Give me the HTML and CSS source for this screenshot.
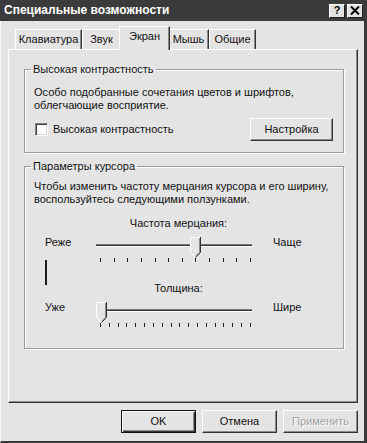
FILE: index.html
```html
<!DOCTYPE html>
<html lang="ru">
<head>
<meta charset="utf-8">
<title>Специальные возможности</title>
<link rel="stylesheet" href="styles.css">
</head>
<body>
<div class="window">
  <div class="titlebar">
    <span class="title">Специальные возможности</span>
    <div class="tbtns">
      <span class="tbtn">?</span>
      <span class="tbtn">
        <svg width="10" height="9" viewBox="0 0 10 9"><path d="M1 0.5 L9 8.5 M9 0.5 L1 8.5" stroke="#000" stroke-width="2"/></svg>
      </span>
    </div>
  </div>
  <div class="body">
    <div class="tabs">
      <div class="tab t1">Клавиатура</div>
      <div class="tab t2">Звук</div>
      <div class="tab t3 sel">Экран</div>
      <div class="tab t4">Мышь</div>
      <div class="tab t5">Общие</div>
    </div>
    <div class="panel">
      <fieldset class="group g1">
        <legend>Высокая контрастность</legend>
        <p class="desc">Особо подобранные сочетания цветов и шрифтов,<br>облегчающие восприятие.</p>
        <div class="crow">
          <label class="check"><span class="box"></span>Высокая контрастность</label>
          <button class="btn setup">Настройка</button>
        </div>
      </fieldset>
      <fieldset class="group g2">
        <legend>Параметры курсора</legend>
        <p class="desc">Чтобы изменить частоту мерцания курсора и его ширину,<br>воспользуйтесь следующими ползунками.</p>
        <div class="caption c1">Частота мерцания:</div>
        <div class="srow">
          <span class="slabel">Реже</span>
          <div class="slider">
            <div class="track"></div>
            <div class="ticks"><i></i><i></i><i></i><i></i><i></i><i></i><i></i><i></i><i></i><i></i><i></i><i></i></div>
            <svg class="thumb" style="left:94px" width="11" height="21" viewBox="0 0 11 21">
              <polygon points="0,0 11,0 11,15.5 5.5,21 0,15.5" fill="#e6e6e6"/>
              <path d="M0.5 15.5 V0.5 H10" stroke="#fff" fill="none"/>
              <path d="M0.5 15.5 L5.5 20.5" stroke="#fff" fill="none"/>
              <path d="M9.5 1 V15.2 L5.5 19.2" stroke="#8a8a8a" fill="none"/>
              <path d="M10.5 0 V15.5 L5.5 20.5" stroke="#333" fill="none"/>
            </svg>
          </div>
          <span class="rlabel">Чаще</span>
        </div>
        <div class="mid">
          <div class="cursor"></div>
          <div class="caption c2">Толщина:</div>
        </div>
        <div class="srow">
          <span class="slabel">Уже</span>
          <div class="slider">
            <div class="track"></div>
            <div class="ticks"><i></i><i></i><i></i><i></i><i></i><i></i><i></i><i></i><i></i><i></i><i></i><i></i><i></i><i></i><i></i><i></i><i></i><i></i></div>
            <svg class="thumb" style="left:0px" width="11" height="21" viewBox="0 0 11 21">
              <polygon points="0,0 11,0 11,15.5 5.5,21 0,15.5" fill="#e6e6e6"/>
              <path d="M0.5 15.5 V0.5 H10" stroke="#fff" fill="none"/>
              <path d="M0.5 15.5 L5.5 20.5" stroke="#fff" fill="none"/>
              <path d="M9.5 1 V15.2 L5.5 19.2" stroke="#8a8a8a" fill="none"/>
              <path d="M10.5 0 V15.5 L5.5 20.5" stroke="#333" fill="none"/>
            </svg>
          </div>
          <span class="rlabel">Шире</span>
        </div>
      </fieldset>
    </div>
    <div class="actions">
      <button class="btn dlg default">OK</button>
      <button class="btn dlg">Отмена</button>
      <button class="btn dlg disabled">Применить</button>
    </div>
  </div>
</div>
</body>
</html>
```

FILE: styles.css
```css
* { box-sizing: border-box; }
html, body { margin: 0; padding: 0; }
body {
  width: 367px;
  height: 443px;
  overflow: hidden;
  background: #e4e4e4;
  font-family: "Liberation Sans", Arial, sans-serif;
  font-size: 11px;
  line-height: 13px;
  color: #111;
}
.window {
  width: 367px;
  height: 443px;
  display: flex;
  flex-direction: column;
}
.titlebar {
  flex: none;
  height: 21px;
  background: #3b3b3b;
  display: flex;
  align-items: center;
  justify-content: space-between;
  padding: 0 4px 0 4px;
}
.title {
  color: #fff;
  font-weight: bold;
  font-size: 12px;
}
.tbtns { display: flex; gap: 2px; }
.tbtn {
  width: 16px;
  height: 14px;
  background: #e2e2e2;
  border: 1px solid;
  border-color: #fff #1e1e1e #1e1e1e #fff;
  display: flex;
  align-items: center;
  justify-content: center;
  font-weight: bold;
  font-size: 11px;
  color: #000;
}
.body {
  flex: 1;
  border-left: 1px solid #fafafa;
  border-right: 3px solid #3a3a3a;
  border-bottom: 2px solid #3a3a3a;
  padding: 5px 6px 0 7px;
}
.tabs {
  height: 23px;
  display: flex;
  align-items: flex-end;
  padding-left: 7px;
}
.tab {
  height: 20px;
  border-top: 1px solid #fff;
  border-left: 1px solid #fff;
  border-right: 1px solid #333;
  box-shadow: inset -1px 0 0 #8a8a8a;
  text-align: center;
  padding-top: 3px;
  white-space: nowrap;
}
.t1 { width: 67px; }
.t2 { width: 39px; }
.t3 { width: 47px; }
.t4 { width: 41px; }
.t5 { width: 47px; }
.tab.sel {
  position: relative;
  z-index: 1;
  height: 24px;
  width: 51px;
  margin: 0 -2px -1px -2px;
  background: #e4e4e4;
  padding-top: 3px;
}
.panel {
  height: 354px;
  border: 1px solid;
  border-color: #fff #333 #333 #fff;
  box-shadow: inset -1px -1px 0 #8a8a8a;
  padding-top: 13px;
}
.group {
  margin: 0 0 0 15px;
  width: 320px;
  padding: 10px 10px 0 9px;
  border: 1px solid #9a9a9a;
  box-shadow: inset 1px 1px 0 #fff, 1px 1px 0 #fff;
}
.group legend {
  padding: 0 2px;
  margin-left: -3px;
  line-height: 13px;
}
.g1 { padding-bottom: 11px; }
.g2 { margin-top: 7px; padding-top: 7px; padding-bottom: 20px; }
.desc { margin: 0; }
.crow {
  margin-top: 6px;
  display: flex;
  align-items: center;
  justify-content: space-between;
}
.check {
  display: flex;
  align-items: center;
  gap: 5px;
  padding-left: 1px;
}
.box {
  width: 13px;
  height: 13px;
  background: #fff;
  border: 1px solid;
  border-color: #808080 #fff #fff #808080;
  box-shadow: inset 1px 1px 0 #404040, inset -1px -1px 0 #d4d4d4;
}
.btn {
  font: inherit;
  color: #111;
  background: #e4e4e4;
  height: 23px;
  border: 1px solid;
  border-color: #fff #333 #333 #fff;
  box-shadow: inset -1px -1px 0 #8a8a8a;
  padding: 0;
  margin: 0;
}
.setup { width: 83px; }
.caption { line-height: 13px; }
.c1 { margin-top: 11px; margin-left: 62px; width: 158px; text-align: center; padding-left: 7px; }
.srow {
  margin-top: 6px;
  display: grid;
  grid-template-columns: 62px 158px auto;
  align-items: start;
}
.slabel { padding-left: 11px; }
.rlabel { padding-left: 19px; }
.slider {
  position: relative;
  margin-top: 1px;
  height: 26px;
}
.track {
  margin-top: 7px;
  width: 156px;
  height: 3px;
  border-top: 1px solid #777;
  border-bottom: 1px solid #fff;
  background: #3a3a3a;
}
.ticks {
  margin-top: 11px;
  width: 155px;
  padding-left: 4px;
  display: flex;
  justify-content: space-between;
}
.ticks i {
  display: block;
  width: 1px;
  height: 4px;
  background: #222;
}
.thumb {
  position: absolute;
  top: 0;
}
.mid {
  margin-top: -3px;
  height: 35px;
  display: grid;
  grid-template-columns: 62px 158px;
}
.cursor {
  margin-left: 11px;
  width: 2px;
  height: 25px;
  background: #1a1a1a;
}
.c2 { align-self: end; text-align: center; padding-left: 7px; }
.actions {
  margin-top: 7px;
  display: flex;
  justify-content: flex-end;
  gap: 6px;
}
.dlg { width: 75px; }
.default {
  border-color: #111;
  box-shadow: inset 1px 1px 0 #fff, inset -1px -1px 0 #333, inset -2px -2px 0 #8a8a8a;
}
.disabled {
  color: #a0a0a0;
  text-shadow: 1px 1px 0 #fff;
}
```
